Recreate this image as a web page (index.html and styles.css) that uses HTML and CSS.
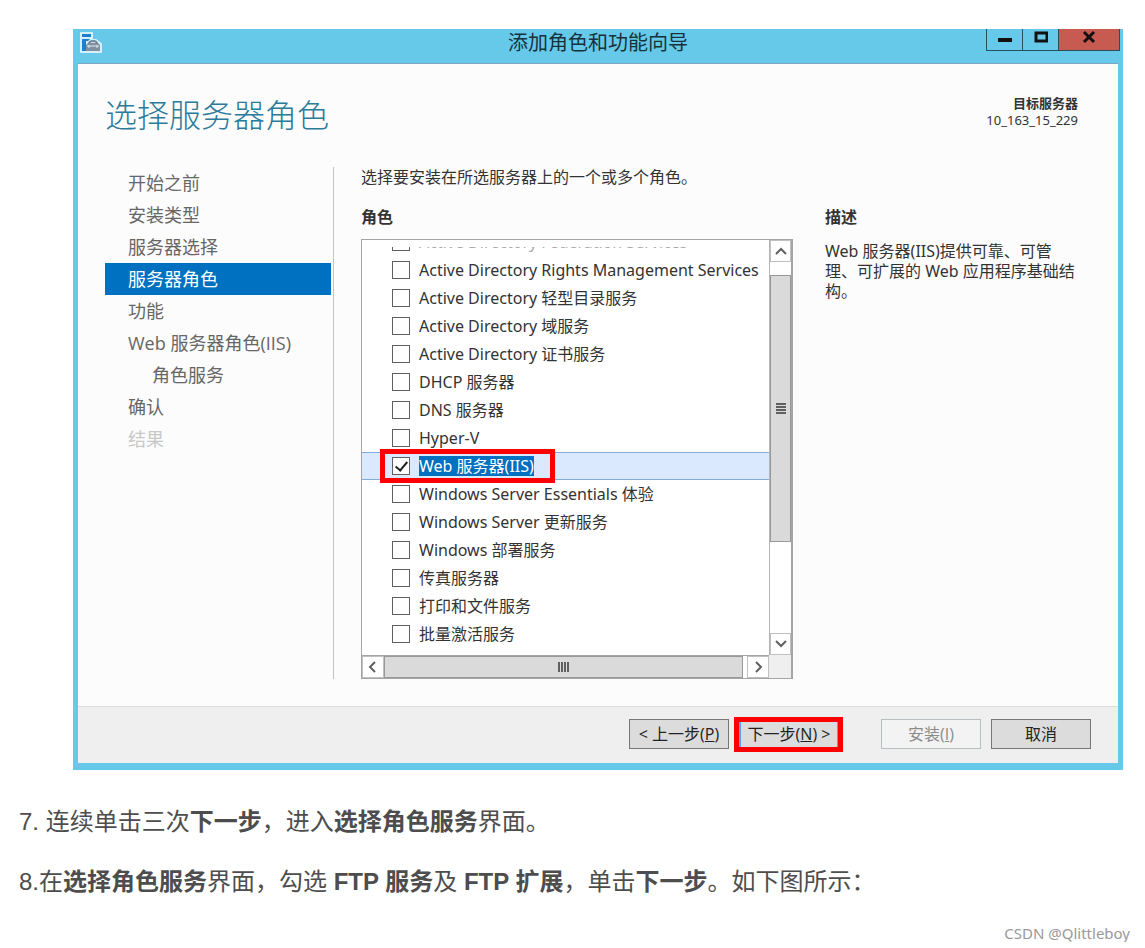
FILE: index.html
```html
<!DOCTYPE html>
<html lang="zh-CN">
  <head>
    <meta charset="UTF-8" />
    <meta name="viewport" content="width=device-width, initial-scale=1.0" />
    <title>添加角色和功能向导</title>
    <link rel="stylesheet" href="styles.css">
  </head>
  <body>
    <main class="article">
      <section class="window">
        <div class="titlebar">
          <svg class="app-icon" width="22" height="22" viewBox="0 0 22 22" aria-hidden="true">
            <path d="M1 1h11v7h4l5 4v8H1z" fill="#d5f0fb" stroke="#d5f0fb" stroke-width="2" stroke-linejoin="round" />
            <path d="M2 2h9v3H2zM2 7h8l-2 2H6v10H2z" fill="#1b7fd6" />
            <path d="M6 13l2-2h10l2 2v6H6z" fill="#8190a0" />
            <path d="M9 12c0-4 8-4 8 0" fill="none" stroke="#75879a" stroke-width="2" />
            <path d="M7 14h12M9 13v3M17 13v3" stroke="#dfe7ee" fill="none" />
          </svg>
          <h1 class="titlebar-text">添加角色和功能向导</h1>
          <div class="window-buttons">
            <button class="win-btn min" type="button" aria-label="最小化">
              <svg width="14" height="14" viewBox="0 0 14 14"><path d="M0 8h14v4H0z" fill="#111" /></svg>
            </button>
            <button class="win-btn max" type="button" aria-label="最大化">
              <svg width="14" height="14" viewBox="0 0 14 14"><path d="M2 3h11v8H2z" fill="none" stroke="#111" stroke-width="3" /></svg>
            </button>
            <button class="win-btn close" type="button" aria-label="关闭">
              <svg width="14" height="14" viewBox="0 0 14 14"><path d="M2 2l10 10M12 2L2 12" stroke="#111" stroke-width="3" /></svg>
            </button>
          </div>
        </div>

        <div class="wizard">
          <header class="wizard-header">
            <h2 class="wizard-title">选择服务器角色</h2>
            <div class="target">
              <b>目标服务器</b>
              <span>10_163_15_229</span>
            </div>
          </header>

          <div class="wizard-body">
            <nav class="steps">
              <a href="#">开始之前</a>
              <a href="#">安装类型</a>
              <a href="#">服务器选择</a>
              <a href="#" class="active">服务器角色</a>
              <a href="#">功能</a>
              <a href="#">Web 服务器角色(IIS)</a>
              <a href="#" class="sub">角色服务</a>
              <a href="#">确认</a>
              <a href="#" class="disabled">结果</a>
            </nav>

            <div class="content">
              <p class="hint">选择要安装在所选服务器上的一个或多个角色。</p>
              <div class="columns">
                <div class="roles">
                  <h3>角色</h3>
                  <div class="listbox">
                    <div class="viewport">
                      <ul class="role-list">
                        <li class="cut"><label><input type="checkbox"><span>Active Directory Federation Services</span></label></li>
                        <li><label><input type="checkbox"><span>Active Directory Rights Management Services</span></label></li>
                        <li><label><input type="checkbox"><span>Active Directory 轻型目录服务</span></label></li>
                        <li><label><input type="checkbox"><span>Active Directory 域服务</span></label></li>
                        <li><label><input type="checkbox"><span>Active Directory 证书服务</span></label></li>
                        <li><label><input type="checkbox"><span>DHCP 服务器</span></label></li>
                        <li><label><input type="checkbox"><span>DNS 服务器</span></label></li>
                        <li><label><input type="checkbox"><span>Hyper-V</span></label></li>
                        <li class="selected"><label><input type="checkbox" checked><span>Web 服务器(IIS)</span></label></li>
                        <li><label><input type="checkbox"><span>Windows Server Essentials 体验</span></label></li>
                        <li><label><input type="checkbox"><span>Windows Server 更新服务</span></label></li>
                        <li><label><input type="checkbox"><span>Windows 部署服务</span></label></li>
                        <li><label><input type="checkbox"><span>传真服务器</span></label></li>
                        <li><label><input type="checkbox"><span>打印和文件服务</span></label></li>
                        <li><label><input type="checkbox"><span>批量激活服务</span></label></li>
                      </ul>
                    </div>
                    <div class="scroll vertical">
                      <button type="button" aria-label="向上滚动">
                        <svg width="12" height="12" viewBox="0 0 12 12"><path d="M1 9l5-5 5 5" /></svg>
                      </button>
                      <div class="track">
                        <div class="thumb">
                          <svg width="10" height="12" viewBox="0 0 10 12"><path d="M0 1h10M0 4h10M0 7h10M0 10h10" /></svg>
                        </div>
                      </div>
                      <button type="button" aria-label="向下滚动">
                        <svg width="12" height="12" viewBox="0 0 12 12"><path d="M1 3l5 5 5-5" /></svg>
                      </button>
                    </div>
                    <div class="scroll horizontal">
                      <button type="button" aria-label="向左滚动">
                        <svg width="12" height="12" viewBox="0 0 12 12"><path d="M8 1L3 6l5 5" /></svg>
                      </button>
                      <div class="track">
                        <div class="thumb">
                          <svg width="12" height="10" viewBox="0 0 12 10"><path d="M1 0v10M4 0v10M7 0v10M10 0v10" /></svg>
                        </div>
                      </div>
                      <button type="button" aria-label="向右滚动">
                        <svg width="12" height="12" viewBox="0 0 12 12"><path d="M4 1l5 5-5 5" /></svg>
                      </button>
                    </div>
                    <div class="corner"></div>
                  </div>
                </div>
                <aside class="description">
                  <h3>描述</h3>
                  <p>Web 服务器(IIS)提供可靠、可管理、可扩展的 Web 应用程序基础结构。</p>
                </aside>
              </div>
            </div>
          </div>

          <footer class="wizard-footer">
            <button type="button">&lt; 上一步(<u>P</u>)</button>
            <button type="button" class="next">下一步(<u>N</u>) &gt;</button>
            <button type="button" class="install" disabled>安装(<u>I</u>)</button>
            <button type="button">取消</button>
          </footer>
        </div>
      </section>

      <p class="step-text">7. 连续单击三次<strong>下一步</strong>，进入<strong>选择角色服务</strong>界面。</p>
      <p class="step-text">8.在<strong>选择角色服务</strong>界面，勾选 <strong>FTP 服务</strong>及 <strong>FTP 扩展</strong>，单击<strong>下一步</strong>。如下图所示：</p>
      <p class="watermark">CSDN @Qlittleboy</p>
    </main>
  </body>
</html>
```
FILE: styles.css
```css
*,
*::before,
*::after {
  box-sizing: border-box;
}
body {
  margin: 0;
  background-color: #fff;
  color: #4d4d4d;
  font-family: "Liberation Sans", "Noto Sans CJK SC", sans-serif;
}
h1,
h2,
h3,
p,
ul {
  margin: 0;
  padding: 0;
}
button {
  padding: 0;
  font: inherit;
}
.article {
  padding: 29px 15px 0 19px;
}

/* window frame */
.window {
  margin: 0 7px 34px 54px;
  padding: 0 5px 7px;
  background-color: #66c9e9;
  color: #333;
  font-family: "Noto Sans", "Noto Sans CJK SC", sans-serif;
  font-size: 16px;
}
.titlebar {
  display: flex;
  height: 34px;
  padding-left: 2px;
}
.app-icon {
  margin-top: 3px;
}
.titlebar-text {
  flex: 1;
  padding-left: 108px;
  color: #16323c;
  font-size: 20px;
  font-weight: 400;
  line-height: 28px;
  text-align: center;
}
.window-buttons {
  display: flex;
  height: 22px;
  margin-right: -2px;
}
.win-btn {
  display: flex;
  justify-content: center;
  width: 36px;
  padding-top: 1px;
  border: 1px solid #26505e;
  border-top: 0;
  border-right: 0;
  background-color: transparent;
}
.win-btn.close {
  width: 62px;
  border-right: 1px solid #26505e;
  background-color: #c75b51;
}

/* wizard */
.wizard {
  border-top: 1px solid #7fa6bf;
  background-color: #fcfcfc;
}
.wizard-header {
  display: flex;
  justify-content: space-between;
  align-items: flex-start;
  padding: 31px 40px 32px 27px;
}
.wizard-title {
  color: #2b7a99;
  font-size: 32px;
  font-weight: 300;
  line-height: 40px;
}
.target {
  display: flex;
  flex-direction: column;
  font-size: 13px;
  line-height: 17px;
  text-align: right;
}
.wizard-body {
  display: flex;
  gap: 27px;
  padding: 0 40px 27px 27px;
}
.steps {
  display: flex;
  flex-direction: column;
  flex: 0 0 229px;
  padding-right: 2px;
  border-right: 1px solid #c4c4c4;
}
.steps a {
  padding-left: 23px;
  color: #666;
  font-family: "Open Sans", "Noto Sans CJK SC", sans-serif;
  font-size: 18px;
  line-height: 32px;
  text-decoration: none;
}
.steps a.active {
  background-color: #0070c0;
  color: #fff;
}
.steps a.sub {
  padding-left: 47px;
}
.steps a.disabled {
  color: #c8c8c8;
}
.content {
  flex: 1;
  min-width: 0;
  line-height: 20px;
}
.columns {
  display: flex;
  gap: 32px;
  margin-top: 20px;
}
.columns h3 {
  margin-bottom: 12px;
  font-size: 16px;
  font-weight: 700;
}
.roles {
  flex: 1;
  min-width: 0;
}
.description {
  flex: 0 0 253px;
}
.description p {
  padding-top: 2px;
}

/* role list */
.listbox {
  display: grid;
  grid-template-columns: 1fr 22px;
  grid-template-rows: 415px 23px;
  border: 1px solid #a5a5a5;
  border-right-width: 2px;
  background-color: #fff;
}
.viewport {
  min-width: 0;
  margin-top: 7px;
  overflow: hidden;
}
.role-list {
  margin-top: -19px;
  list-style: none;
}
.role-list li {
  height: 28px;
  padding-left: 30px;
  border: 1px solid transparent;
  border-width: 1px 0;
}
.role-list label {
  display: flex;
  align-items: center;
  gap: 9px;
  height: 26px;
  white-space: nowrap;
}
.role-list .cut span {
  color: #aaa;
}
.role-list input {
  display: grid;
  place-content: center;
  width: 18px;
  height: 18px;
  margin: 0;
  border: 1px solid #606060;
  background-color: #fff;
  appearance: none;
}
.role-list input:checked::before {
  content: "";
  width: 7px;
  height: 12px;
  margin-bottom: 3px;
  border: solid #222;
  border-width: 0 2px 2px 0;
  transform: rotate(40deg);
}
.role-list .selected {
  position: relative;
  z-index: 1;
  border-color: #84acdd;
  background-color: #dbe9fe;
}
.role-list .selected span {
  background-color: #0070c0;
  color: #fff;
}
/* red highlight frames */
.role-list .selected::after,
.next::after {
  content: "";
  position: absolute;
  border: 5px solid #fe0000;
}
.role-list .selected::after {
  top: -4px;
  left: 18px;
  width: 175px;
  height: 34px;
}

/* scrollbars */
.scroll {
  display: flex;
  background-color: #fff;
}
.scroll button,
.scroll .thumb {
  display: flex;
  align-items: center;
  justify-content: center;
}
.scroll button {
  flex: 0 0 22px;
  border: 1px solid #c0c0c0;
  background-color: #fff;
}
.scroll path {
  fill: none;
  stroke: #606060;
  stroke-width: 2;
}
.scroll .track {
  display: flex;
  flex: 1;
}
.scroll .thumb {
  border: 1px solid #999;
  background-color: #dadada;
}
.vertical {
  flex-direction: column;
  border-left: 1px solid #b5b5b5;
}
.vertical .track {
  flex-direction: column;
  padding: 13px 0 91px;
}
.vertical .thumb,
.horizontal .thumb {
  flex: 1;
}
.horizontal {
  border-top: 1px solid #a5a5a5;
}
.horizontal .track {
  padding-right: 4px;
}
.corner {
  background-color: #efefef;
}

/* footer buttons */
.wizard-footer {
  display: flex;
  justify-content: flex-end;
  gap: 10px;
  padding: 12px 27px 14px;
  border-top: 1px solid #dcdcdc;
  background-color: #efefef;
}
.wizard-footer button {
  position: relative;
  width: 100px;
  height: 30px;
  border: 1px solid #777;
  background-color: #dcdcdc;
  color: #222;
  font-family: "Open Sans", "Noto Sans CJK SC", sans-serif;
  line-height: 28px;
  white-space: nowrap;
}
.wizard-footer .next {
  border: 2px solid #5c9fec;
  line-height: 26px;
}
.next::after {
  top: -4px;
  right: -6px;
  bottom: -5px;
  left: -7px;
}
.wizard-footer .install {
  margin-left: 32px;
  border-color: #b8bfc2;
  background-color: #f3f3f3;
  color: #8c8c8c;
}

/* article text */
.step-text {
  margin-bottom: 24px;
  font-size: 24px;
  line-height: 36px;
}
.watermark {
  color: #999;
  font-family: "Noto Sans", sans-serif;
  font-size: 15px;
  line-height: 18px;
  text-align: right;
}
```
